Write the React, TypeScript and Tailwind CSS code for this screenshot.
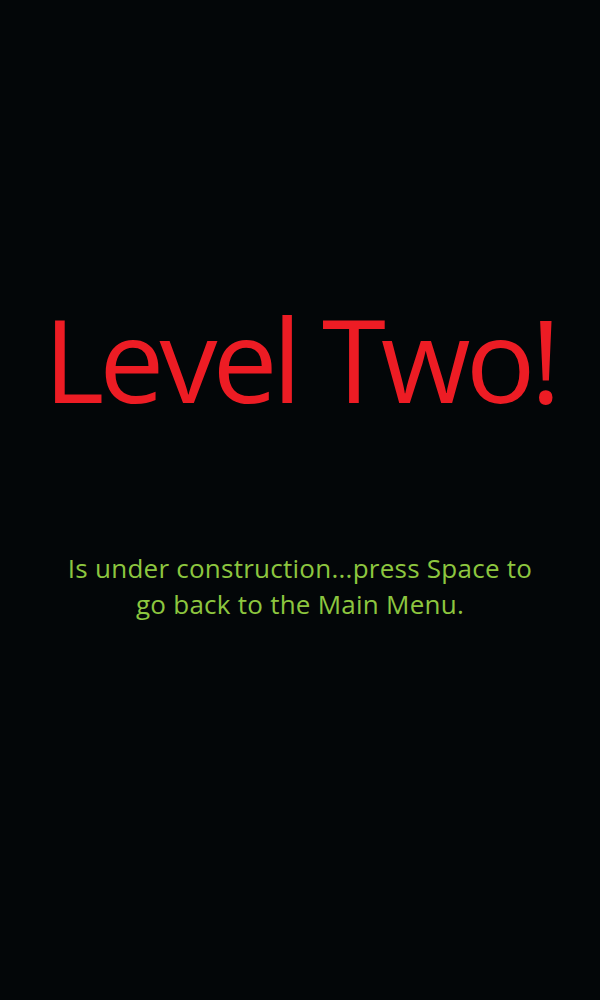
export default function App() {
  return (
    <div className="w-[600px] h-[1000px] bg-[#030608] flex flex-col items-center pt-[300px]" style={{ fontFamily: '"Open Sans", sans-serif' }}>
      <h1 className="text-[116px] leading-none text-[#ed1c24] whitespace-nowrap tracking-[-5px]">Level Two!</h1>
      <p className="mt-[134px] text-[26px] leading-[36px] text-[#8dc63f] text-center w-[490px] tracking-[0.25px]">
        Is under construction...press Space to go back to the Main Menu.
      </p>
    </div>
  );
}
